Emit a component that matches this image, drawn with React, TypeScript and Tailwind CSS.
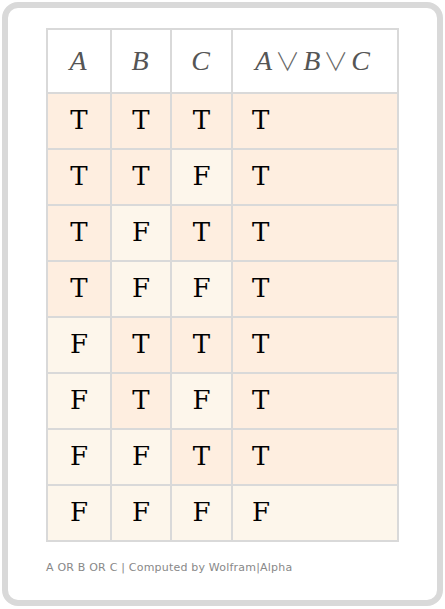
import React from "react";

const rows = [
  ["T", "T", "T", "T"],
  ["T", "T", "F", "T"],
  ["T", "F", "T", "T"],
  ["T", "F", "F", "T"],
  ["F", "T", "T", "T"],
  ["F", "T", "F", "T"],
  ["F", "F", "T", "T"],
  ["F", "F", "F", "F"],
];

export default function App() {
  return (
    <div className="w-[445px] h-[609px] bg-white p-[2px]">
      <div className="h-[604px] w-[441px] border-[6px] border-[#d9d9d9] rounded-[16px] bg-white pt-[20px] pl-[38px]">
        {/* truth table */}
        <div className="grid grid-cols-[62px_58px_59px_164px] auto-rows-[54px] grid-rows-[62px] gap-[2px] p-[2px] bg-[#d9d9d9] w-[353px]">
          {["A", "B", "C"].map((h) => (
            <div
              key={h}
              className="bg-white flex items-center justify-center text-[#555] italic text-[28px] pr-[2px] font-['Liberation_Serif',serif]"
            >
              {h}
            </div>
          ))}
          <div className="bg-white flex items-center pl-[22px] text-[#555] italic text-[28px] font-['Liberation_Serif',serif]">
            A
            <span className="not-italic font-light text-[25px] mx-[3px] text-[#666] font-['Noto_Sans_CJK_SC',sans-serif]">∨</span>
            B
            <span className="not-italic font-light text-[25px] mx-[3px] text-[#666] font-['Noto_Sans_CJK_SC',sans-serif]">∨</span>
            C
          </div>
          {rows.map((r, i) =>
            r.map((v, j) => (
              <div
                key={i + "-" + j}
                className={
                  (v === "T" ? "bg-[#feeee0] " : "bg-[#fdf6eb] ") +
                  (j === 3 ? "justify-start pl-[19px] " : "justify-center ") +
                  "flex items-center pb-[2px] text-black text-[26px] font-['DejaVu_Serif',serif]"
                }
              >
                {v}
              </div>
            ))
          )}
        </div>
        <p className="mt-[18px] text-[11px] tracking-[0.2px] text-[#888] font-['DejaVu_Sans',sans-serif]">
          A OR B OR C | Computed by Wolfram|Alpha
        </p>
      </div>
    </div>
  );
}
